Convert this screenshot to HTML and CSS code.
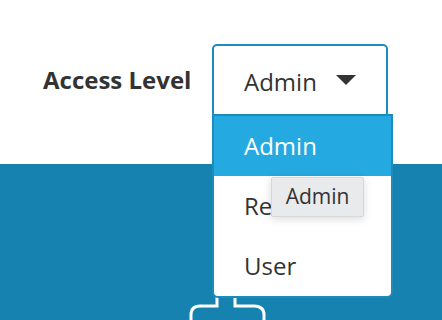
FILE: index.html
```html
<!DOCTYPE html>
<html>
<head>
    <title>Access Level</title>
    <link rel="stylesheet" href="styles.css">
</head>
<body>
    <div class="top-panel">
        <div class="field-row">
            <label class="field-label">Access Level</label>
            <div class="select-wrap">
                <div class="select-box">
                    <span class="select-value">Admin</span>
                    <span class="caret"></span>
                </div>
                <ul class="dropdown">
                    <li class="option selected">Admin</li>
                    <li class="option">Read</li>
                    <li class="option">User</li>
                </ul>
                <div class="tooltip">Admin</div>
            </div>
        </div>
    </div>
    <div class="bottom-panel">
        <svg class="connector" width="80" height="30" viewBox="0 0 80 30">
            <path d="M29 0 V14 H12 Q3 14 3 23 V30 M47 0 V14 H66 Q76 14 76 23 V30" fill="none" stroke="#fff" stroke-width="3"/>
        </svg>
    </div>
</body>
</html>
```

FILE: styles.css
```css
/* page */
body {
    margin: 0;
    font-family: "Open Sans", sans-serif;
    color: #333;
    background-color: #1682b0;
}

.top-panel {
    background-color: #fff;
    height: 164px;
}

.field-row {
    display: flex;
    align-items: center;
    padding: 44px 0 0 43px;
}

.field-label {
    font-size: 24px;
    font-weight: bold;
    color: #333;
    width: 169px;
    margin-top: -4px;
}

.select-wrap {
    position: relative;
}

.select-box {
    box-sizing: border-box;
    width: 176px;
    height: 74px;
    border: 2px solid #1c8cbc;
    border-radius: 5px;
    background-color: #fff;
    display: flex;
    align-items: center;
    padding-left: 30px;
}

.select-value {
    font-size: 24px;
    width: 92px;
}

.caret {
    width: 0;
    height: 0;
    border-left: 10px solid transparent;
    border-right: 10px solid transparent;
    border-top: 10px solid #333;
    margin-top: -3px;
}

.dropdown {
    position: absolute;
    top: 70px;
    left: 0;
    width: 181px;
    box-sizing: border-box;
    margin: 0;
    padding: 0;
    list-style: none;
    background-color: #fff;
    border: 2px solid #1c8cbc;
    border-radius: 0 0 6px 6px;
}

.option {
    height: 60px;
    line-height: 60px;
    padding-left: 30px;
    font-size: 24px;
    color: #333;
}

.option.selected {
    background-color: #24a9e0;
    color: #fff;
}

.tooltip {
    position: absolute;
    top: 133px;
    left: 59px;
    width: 93px;
    height: 40px;
    box-sizing: border-box;
    background-color: #e9eaeb;
    border: 1px solid #d6d8da;
    border-radius: 2px;
    box-shadow: 0 2px 8px rgba(0, 0, 0, 0.15);
    font-size: 21px;
    line-height: 36px;
    text-align: center;
    color: #333;
}

.bottom-panel {
    height: 156px;
    padding-left: 188px;
    padding-top: 128px;
    box-sizing: border-box;
}

.connector {
    display: block;
}
```
